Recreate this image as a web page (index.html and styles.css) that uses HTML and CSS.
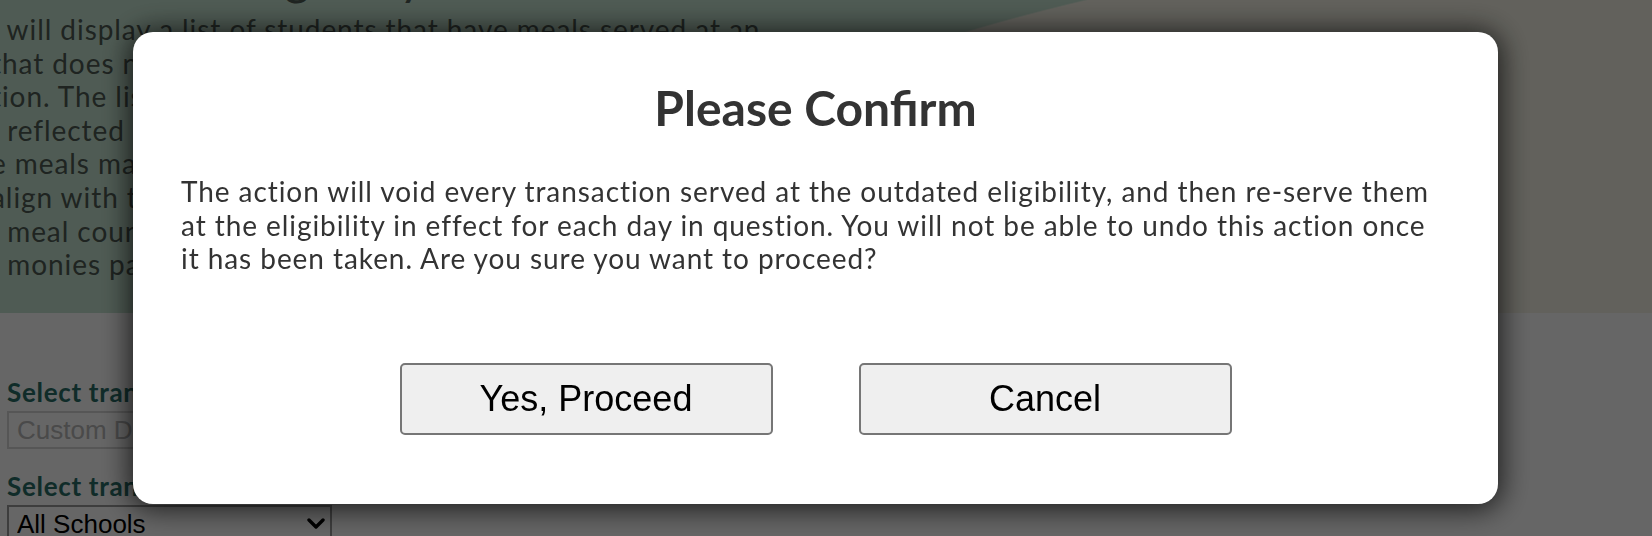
FILE: index.html
```html
<!DOCTYPE html>
<html lang="en">
<head>
<meta charset="utf-8">
<title>Outdated Eligibility</title>
<link rel="stylesheet" href="styles.css">
</head>
<body>
<div class="page">
  <header class="hero">
    <h1 class="hero-title">Outdated Eligibility</h1>
    <p class="hero-text">  will display a list of students that have meals served at an
that does not match the eligibility in effect on the date of service
tion. The list shows each day where the served eligibility is not
  reflected in the current application record for the student
e meals may need to be voided and re-served so that the totals
align with the eligibility determined for each student and day
  meal counts and claim reports stay accurate for the district
  monies paid for each meal are adjusted to the correct price</p>
  </header>
  <section class="filters">
    <label class="field-label" for="range">Select transaction date range</label>
    <input class="field-input" id="range" type="text" placeholder="Custom Date Range">
    <label class="field-label field-label--second" for="school">Select transaction school</label>
    <div class="select-wrap">
      <select class="field-select" id="school">
        <option>All Schools</option>
      </select>
      <svg class="select-chevron" viewBox="0 0 18 11" width="18" height="11" aria-hidden="true">
        <path d="M2 2 L9 9 L16 2" fill="none" stroke="#000" stroke-width="3.4" stroke-linecap="round" stroke-linejoin="round"/>
      </svg>
    </div>
  </section>
</div>

<div class="overlay">
  <div class="modal" role="dialog" aria-labelledby="confirm-title">
    <h2 class="modal-title" id="confirm-title">Please Confirm</h2>
    <p class="modal-text">The action will void every transaction served at the outdated eligibility, and then re-serve them at the eligibility in effect for each day in question. You will not be able to undo this action once it has been taken. Are you sure you want to proceed?</p>
    <div class="modal-actions">
      <button class="btn" type="button">Yes, Proceed</button>
      <button class="btn" type="button">Cancel</button>
    </div>
  </div>
</div>
</body>
</html>
```

FILE: styles.css
```css
* { box-sizing: border-box; }

html, body {
  margin: 0;
  padding: 0;
  height: 100%;
  overflow: hidden;
  background: #ffffff;
  font-family: Lato, "Open Sans", "DejaVu Sans", sans-serif;
  letter-spacing: 0.93px;
}

.page {
  width: 100%;
}

.hero {
  height: 313px;
  overflow: hidden;
  background:
    radial-gradient(ellipse 1416px 764px at 1650px 700px, #f5f3e6 99.8%, rgba(245,243,230,0) 100%),
    #c6e4d2;
  color: #4e5a53;
}

.hero-title {
  margin: -51px 0 0 20px;
  font-size: 48px;
  line-height: 56px;
  font-weight: 400;
  letter-spacing: 0;
  white-space: nowrap;
}

.hero-text {
  margin: 8px 0 0 -9px;
  font-size: 28px;
  line-height: 33.6px;
  white-space: pre;
}

.filters {
  padding: 64px 0 0 7px;
  display: flex;
  flex-direction: column;
  align-items: flex-start;
}

.field-label {
  font-size: 26px;
  line-height: 31.2px;
  font-weight: 700;
  letter-spacing: 0.7px;
  color: #2a6e68;
}

.field-label--second {
  margin-top: 22px;
}

.field-input {
  margin-top: 3px;
  width: 325px;
  height: 38px;
  border: 2px solid #d6d6d6;
  padding: 0 8px;
  font-family: "Liberation Sans", Arial, sans-serif;
  font-size: 26px;
  letter-spacing: 0;
  background: #fff;
}

.field-input::placeholder {
  color: #b8b8b8;
}

.select-wrap {
  margin-top: 3px;
  position: relative;
  width: 325px;
}

.field-select {
  appearance: none;
  -webkit-appearance: none;
  width: 325px;
  height: 38px;
  border: 2px solid #9a9a9a;
  border-radius: 0;
  padding: 0 8px;
  font-family: "Liberation Sans", Arial, sans-serif;
  font-size: 26px;
  letter-spacing: 0;
  color: #000;
  background: #fff;
}

.select-chevron {
  position: absolute;
  right: 7px;
  top: 13px;
}

.overlay {
  position: fixed;
  inset: 0;
  background: rgba(0, 0, 0, 0.6);
  padding: 32px 0 0 133px;
}

.modal {
  width: 1365px;
  height: 472px;
  background: #ffffff;
  border-radius: 20px;
  box-shadow: 0 2px 28px 4px rgba(0, 0, 0, 0.7);
  padding: 48px 48px 0;
  color: #333333;
  display: flex;
  flex-direction: column;
}

.modal-title {
  margin: 0;
  text-align: center;
  font-size: 48px;
  line-height: 56px;
  font-weight: 700;
  letter-spacing: 0;
}

.modal-text {
  margin: 39px 0 0;
  padding-right: 16px;
  font-size: 28px;
  line-height: 33.6px;
}

.modal-actions {
  margin-top: 87px;
  display: flex;
  justify-content: center;
  gap: 86px;
}

.btn {
  width: 373px;
  height: 72px;
  border: 2px solid #767676;
  border-radius: 5px;
  background: #efefef;
  color: #000;
  font-family: "Liberation Sans", Arial, sans-serif;
  font-size: 36px;
  letter-spacing: 0;
  padding: 0;
}
```
